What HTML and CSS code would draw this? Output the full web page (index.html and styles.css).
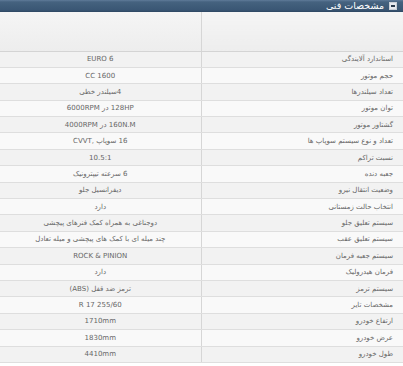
FILE: index.html
```html
<!DOCTYPE html>
<html lang="fa" dir="rtl">
<head>
<meta charset="utf-8">
<title>مشخصات فنی</title>
<link rel="stylesheet" href="styles.css">
</head>
<body>
<div class="panel">
  <div class="head">
    <span class="toggle"><span class="minus"></span></span>
    <span class="title">مشخصات فنی</span>
  </div>
  <table class="specs">
    <tr class="blank"><td class="label"></td><td class="value"></td></tr>
    <tr><td class="label">استاندارد آلایندگی</td><td class="value">EURO 6</td></tr>
    <tr><td class="label">حجم موتور</td><td class="value">CC 1600</td></tr>
    <tr><td class="label">تعداد سیلندرها</td><td class="value">4سیلندر خطی</td></tr>
    <tr><td class="label">توان موتور</td><td class="value">128HP در 6000RPM</td></tr>
    <tr><td class="label">گشتاور موتور</td><td class="value">160N.M در 4000RPM</td></tr>
    <tr><td class="label">تعداد و نوع سیستم سوپاپ ها</td><td class="value">16 سوپاپ ,CVVT</td></tr>
    <tr><td class="label">نسبت تراکم</td><td class="value">10.5:1</td></tr>
    <tr><td class="label">جعبه دنده</td><td class="value">6 سرعته تیپترونیک</td></tr>
    <tr><td class="label">وضعیت انتقال نیرو</td><td class="value">دیفرانسیل جلو</td></tr>
    <tr><td class="label">انتخاب حالت زمستانی</td><td class="value">دارد</td></tr>
    <tr><td class="label">سیستم تعلیق جلو</td><td class="value">دوجناغی به همراه کمک فنرهای پیچشی</td></tr>
    <tr><td class="label">سیستم تعلیق عقب</td><td class="value">چند میله ای با کمک های پیچشی و میله تعادل</td></tr>
    <tr><td class="label">سیستم جعبه فرمان</td><td class="value">ROCK &amp; PINION</td></tr>
    <tr><td class="label">فرمان هیدرولیک</td><td class="value">دارد</td></tr>
    <tr><td class="label">سیستم ترمز</td><td class="value">ترمز ضد قفل (ABS)</td></tr>
    <tr><td class="label">مشخصات تایر</td><td class="value">R 17 255/60</td></tr>
    <tr><td class="label">ارتفاع خودرو</td><td class="value">1710mm</td></tr>
    <tr><td class="label">عرض خودرو</td><td class="value">1830mm</td></tr>
    <tr><td class="label">طول خودرو</td><td class="value">4410mm</td></tr>
  </table>
</div>
</body>
</html>
```

FILE: styles.css
```css
html, body {
  margin: 0;
  padding: 0;
  background: #ffffff;
}

.panel {
  width: 403px;
  font-family: "DejaVu Sans", Tahoma, sans-serif;
}

.head {
  height: 12px;
  display: flex;
  align-items: center;
  gap: 5px;
  padding-right: 6px;
  background: linear-gradient(#5f7b99 0, #45627f 2px, #3a5674 10px, #2e4762 12px);
  box-sizing: border-box;
}

.toggle {
  width: 8px;
  height: 8px;
  background: #e6e9ee;
  border: 1px solid #c8ced6;
  box-sizing: border-box;
  display: flex;
  align-items: center;
  justify-content: center;
}

.minus {
  width: 4px;
  height: 2px;
  background: #2a3a4c;
}

.title {
  color: #ffffff;
  font-size: 9.5px;
  line-height: 12px;
}

.specs {
  width: 403px;
  border-collapse: collapse;
  table-layout: fixed;
}

.specs td {
  height: 16.4px;
  padding: 0;
  border-bottom: 1px solid #dedede;
  font-size: 7px;
  color: #666666;
  white-space: nowrap;
  box-sizing: border-box;
}

.specs tr:nth-child(even) td {
  background: #f2f2f2;
}

.specs tr:nth-child(odd) td {
  background: #f9f9f9;
}

.specs td.label {
  width: 202px;
  text-align: right;
  padding-right: 10px;
  border-left: 1px solid #d6d6d6;
}

.specs td.value {
  text-align: center;
}

.specs tr.blank td {
  height: 39px;
  background: linear-gradient(#f5f5f5, #ededed);
  border-bottom: 1px solid #d4d4d4;
}
```
